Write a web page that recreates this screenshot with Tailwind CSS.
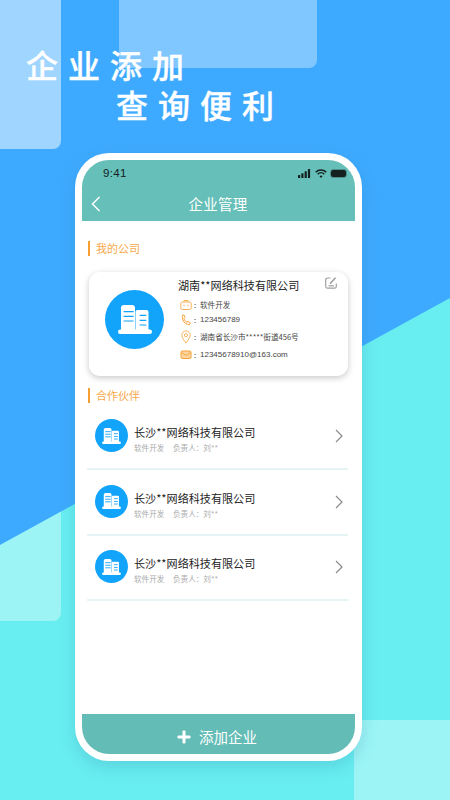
<!DOCTYPE html>
<html lang="zh-CN">
<head>
    <meta charset="UTF-8">
    <meta name="viewport" content="width=device-width, initial-scale=1.0">
    <title>企业管理</title>
    <script src="https://cdn.jsdelivr.net/npm/@tailwindcss/browser@4"></script>
</head>
<body class="m-0 bg-[#3eaaff]">
<div class="relative w-[450px] h-[800px] overflow-hidden bg-[#3eaaff] font-['Noto_Sans_CJK_SC','Noto_Sans',sans-serif]">

    <!-- background shapes -->
    <div class="absolute left-0 top-0 w-[61px] h-[149px] bg-white/50 rounded-br-lg"></div>
    <div class="absolute left-[119px] top-0 w-[198px] h-[68px] bg-white/35 rounded-br-lg"></div>
    <div class="absolute inset-0 bg-[#68eef0] [clip-path:polygon(0_545px,450px_298px,450px_800px,0_800px)]">
        <div class="absolute left-0 top-[480px] w-[61px] h-[141px] bg-white/35 rounded-br-lg"></div>
        <div class="absolute left-[354px] top-[720px] w-[96px] h-[80px] bg-white/35"></div>
    </div>

    <div class="relative flex flex-col h-full">
        <!-- headline -->
        <div class="pt-[44px] pl-[26px] text-white text-[32px] leading-[40px] tracking-[10px] font-medium [-webkit-text-stroke:0.35px_white]">
            <div class="h-[40px] whitespace-nowrap">企业添加</div>
            <div class="h-[40px] pl-[90px] whitespace-nowrap">查询便利</div>
        </div>

        <!-- phone -->
        <div class="mt-[29px] ml-[75px] w-[287px] h-[608px] bg-white rounded-[34px] p-[7px] shadow-[0_6px_16px_rgba(40,120,160,0.22)]">
            <div class="flex flex-col h-full bg-white rounded-[27px] overflow-hidden">
                <!-- status + nav -->
                <div class="h-[61px] shrink-0 bg-[#66bfb8] flex flex-col">
                    <div class="flex items-center justify-between h-[25px] pl-[21px] pr-[9px] pt-[2px]">
                        <span class="text-[11.5px] tracking-[0.3px] text-[#14211f] font-['Liberation_Sans',sans-serif]">9:41</span>
                        <div class="flex items-center gap-[4px]">
                            <svg width="13" height="9" viewBox="0 0 13 9" fill="#14211f"><rect x="0" y="6" width="2.2" height="3" rx=".5"/><rect x="3.3" y="4.3" width="2.2" height="4.7" rx=".5"/><rect x="6.6" y="2.3" width="2.2" height="6.7" rx=".5"/><rect x="9.9" y="0" width="2.2" height="9" rx=".5"/></svg>
                            <svg width="12" height="9" viewBox="0 0 12 9" fill="none" stroke="#14211f" stroke-width="1.5"><path d="M.7 3.2a7.5 7.5 0 0 1 10.6 0"/><path d="M2.7 5.2a4.7 4.7 0 0 1 6.6 0"/><path d="M6 9 4.5 7.3a2.1 2.1 0 0 1 3 0z" fill="#14211f" stroke="none"/></svg>
                            <div class="w-[15px] h-[7px] rounded-[2px] bg-[#14211f] outline outline-[1px] outline-[#14211f]/30"></div>
                        </div>
                    </div>
                    <div class="relative flex items-center justify-center h-[36px] pr-[1px] pt-[2px]">
                        <svg class="absolute left-[9px] top-[11px]" width="10" height="16" viewBox="0 0 10 16" fill="none" stroke="white" stroke-width="1.5"><path d="M8.5 1 1.5 8l7 7"/></svg>
                        <span class="text-[14.5px] text-white tracking-[0.2px]">企业管理</span>
                    </div>
                </div>

                <!-- content -->
                <div class="flex-1 px-[5px] pt-[20px]">
                    <div class="flex items-center h-[15px] ml-[0.5px] border-l-[2px] border-[#f7a032] pl-[6.5px] text-[11px] text-[#f7a94a]">我的公司</div>

                    <!-- my company card -->
                    <div class="relative flex mt-[16px] ml-[2px] w-[259px] h-[104px] bg-white rounded-[11px] shadow-[0_2px_6px_rgba(0,0,0,0.22)]">
                        <div class="w-[59px] h-[59px] mt-[18px] ml-[16px] shrink-0 rounded-full bg-[#12a3fb] flex items-center justify-center">
                            <svg width="34" height="29" viewBox="0 0 34 29"><path d="M3 26V3a3 3 0 0 1 3-3h8a3 3 0 0 1 3 3v23z" fill="white"/><path d="M17.500 26V7a2 2 0 0 1 2-2h9a2 2 0 0 1 2 2v19z" fill="white"/><rect x="0" y="24.500" width="34" height="4.500" rx="2.200" fill="white"/><path d="M5.600 6.600h10M5.600 11.300h10M5.600 16h10M21.600 10.300h6.700M21.600 15.300h6.700M21.600 20h6.700" stroke="#12a3fb" stroke-width="1.200"/></svg>
                        </div>
                        <div class="ml-[14px] pt-[5px]">
                            <div class="text-[11.1px] leading-[17px] text-[#222] whitespace-nowrap">湖南**网络科技有限公司</div>
                            <div class="mt-[3.5px] flex flex-col text-[7.6px] text-[#444]">
                                <div class="flex items-center h-[15px] ml-[2px]">
                                    <svg width="12" height="12" viewBox="0 0 12 12" fill="none" stroke="#f9b058" stroke-width="1"><rect x=".8" y="3" width="10.400" height="7.500" rx="1.800"/><path d="M4 3V1.500h4V3"/><path d="M3.500 6.500h1M7.500 6.500h1" stroke-width="1.400"/></svg>
                                    <span class="w-[6px] text-center">:</span><span class="ml-[2px]">软件开发</span>
                                </div>
                                <div class="flex items-center h-[15px] ml-[2px]">
                                    <svg width="12" height="12" viewBox="0 0 12 12" fill="none" stroke="#f7a032" stroke-width="1"><path d="M2.500 1.200 4 1l1 2.500-1 1c.5 1.500 1.500 3 3 3.800l1.200-.9 2 1.300-.4 1.800c-.3.400-3.800.2-5.800-2.500C2.400 5.500 2 2.500 2.500 1.200z"/></svg>
                                    <span class="w-[6px] text-center">:</span><span class="ml-[2px] text-[8px] font-['Liberation_Sans',sans-serif]">123456789</span>
                                </div>
                                <div class="flex items-center h-[17px] mt-[1px] ml-[2px]">
                                    <svg width="12" height="14" viewBox="0 0 12 15" fill="none" stroke="#f9b058" stroke-width="1"><path d="M6 14C3.500 10.500 1.500 8 1.500 5.500a4.500 4.500 0 0 1 9 0C10.500 8 8.500 10.500 6 14z"/><circle cx="6" cy="5.500" r="1.700"/></svg>
                                    <span class="w-[6px] text-center">:</span><span class="ml-[2px] whitespace-nowrap">湖南省长沙市*****街道456号</span>
                                </div>
                                <div class="flex items-center h-[15px] mt-[1.5px] ml-[2px]">
                                    <svg width="12" height="10" viewBox="0 0 12 10"><rect x="1" y="1" width="10" height="7.500" rx="1.300" fill="#fcd5a0" stroke="#f7a032"/><path d="M1.500 2.500 6 5.500l4.500-3" fill="none" stroke="#f7a032" stroke-width=".9"/></svg>
                                    <span class="w-[6px] text-center">:</span><span class="ml-[2px] text-[8px] whitespace-nowrap font-['Liberation_Sans',sans-serif]">12345678910@163.com</span>
                                </div>
                            </div>
                        </div>
                        <svg class="absolute right-[11px] top-[5px]" width="12" height="12" viewBox="0 0 12 12" fill="none" stroke="#a0a0a0" stroke-width="1.200"><path d="M5.500 1H2.500A1.800 1.800 0 0 0 .7 2.800v6.600a1.800 1.800 0 0 0 1.800 1.800h7a1.800 1.800 0 0 0 1.800-1.800V6.500"/><path d="M5 6.800 10.500.7" stroke-width="1.600"/><path d="M3.500 8.800h5.500"/></svg>
                    </div>

                    <div class="flex items-center h-[15px] mt-[12px] ml-[0.5px] border-l-[2px] border-[#f7a032] pl-[6.5px] text-[11px] text-[#f7a94a]">合作伙伴</div>

                    <!-- partners -->
                    <div class="mt-[1.5px] w-[261px]">
                        <div class="flex items-start h-[65.5px] border-b-2 border-[#e4f3f3] pt-[14.5px] pl-[8px] pr-[5px]">
                            <div class="w-[33px] h-[33px] shrink-0 rounded-full bg-[#12a3fb] flex items-center justify-center">
                                <svg width="19" height="16" viewBox="0 0 34 29"><path d="M3 26V3a3 3 0 0 1 3-3h8a3 3 0 0 1 3 3v23z" fill="white"/><path d="M17.500 26V7a2 2 0 0 1 2-2h9a2 2 0 0 1 2 2v19z" fill="white"/><rect x="0" y="24.500" width="34" height="4.500" rx="2.200" fill="white"/><path d="M5.600 6.600h10M5.600 11.300h10M5.600 16h10M21.600 10.300h6.700M21.600 15.300h6.700M21.600 20h6.700" stroke="#12a3fb" stroke-width="1.600"/></svg>
                            </div>
                            <div class="ml-[6px] mt-[5px] flex-1">
                                <div class="text-[11.1px] leading-[17px] text-[#222] whitespace-nowrap">长沙**网络科技有限公司</div>
                                <div class="mt-[1px] flex text-[7.6px] leading-[12px] text-[#aaa]"><span class="w-[39px]">软件开发</span><span>负责人：刘**</span></div>
                            </div>
                            <svg class="mt-[10px]" width="8" height="14" viewBox="0 0 8 14" fill="none" stroke="#8b8b8b" stroke-width="1.200"><path d="M1 1l6 6-6 6"/></svg>
                        </div>
                        <div class="flex items-start h-[65.5px] border-b-2 border-[#e4f3f3] pt-[14.5px] pl-[8px] pr-[5px]">
                            <div class="w-[33px] h-[33px] shrink-0 rounded-full bg-[#12a3fb] flex items-center justify-center">
                                <svg width="19" height="16" viewBox="0 0 34 29"><path d="M3 26V3a3 3 0 0 1 3-3h8a3 3 0 0 1 3 3v23z" fill="white"/><path d="M17.500 26V7a2 2 0 0 1 2-2h9a2 2 0 0 1 2 2v19z" fill="white"/><rect x="0" y="24.500" width="34" height="4.500" rx="2.200" fill="white"/><path d="M5.600 6.600h10M5.600 11.300h10M5.600 16h10M21.600 10.300h6.700M21.600 15.300h6.700M21.600 20h6.700" stroke="#12a3fb" stroke-width="1.600"/></svg>
                            </div>
                            <div class="ml-[6px] mt-[5px] flex-1">
                                <div class="text-[11.1px] leading-[17px] text-[#222] whitespace-nowrap">长沙**网络科技有限公司</div>
                                <div class="mt-[1px] flex text-[7.6px] leading-[12px] text-[#aaa]"><span class="w-[39px]">软件开发</span><span>负责人：刘**</span></div>
                            </div>
                            <svg class="mt-[10px]" width="8" height="14" viewBox="0 0 8 14" fill="none" stroke="#8b8b8b" stroke-width="1.200"><path d="M1 1l6 6-6 6"/></svg>
                        </div>
                        <div class="flex items-start h-[65.5px] border-b-2 border-[#e4f3f3] pt-[14.5px] pl-[8px] pr-[5px]">
                            <div class="w-[33px] h-[33px] shrink-0 rounded-full bg-[#12a3fb] flex items-center justify-center">
                                <svg width="19" height="16" viewBox="0 0 34 29"><path d="M3 26V3a3 3 0 0 1 3-3h8a3 3 0 0 1 3 3v23z" fill="white"/><path d="M17.500 26V7a2 2 0 0 1 2-2h9a2 2 0 0 1 2 2v19z" fill="white"/><rect x="0" y="24.500" width="34" height="4.500" rx="2.200" fill="white"/><path d="M5.600 6.600h10M5.600 11.300h10M5.600 16h10M21.600 10.300h6.700M21.600 15.300h6.700M21.600 20h6.700" stroke="#12a3fb" stroke-width="1.600"/></svg>
                            </div>
                            <div class="ml-[6px] mt-[5px] flex-1">
                                <div class="text-[11.1px] leading-[17px] text-[#222] whitespace-nowrap">长沙**网络科技有限公司</div>
                                <div class="mt-[1px] flex text-[7.6px] leading-[12px] text-[#aaa]"><span class="w-[39px]">软件开发</span><span>负责人：刘**</span></div>
                            </div>
                            <svg class="mt-[10px]" width="8" height="14" viewBox="0 0 8 14" fill="none" stroke="#8b8b8b" stroke-width="1.200"><path d="M1 1l6 6-6 6"/></svg>
                        </div>
                    </div>
                </div>

                <!-- add button -->
                <div class="h-[40px] shrink-0 bg-[#63bcb5] flex items-center justify-center text-white text-[14.5px] pt-[6px] pr-[3px]">
                    <svg class="mr-[8px]" width="14" height="14" viewBox="0 0 14 14" fill="white"><rect x="5.500" y="0.500" width="3" height="13" rx="1"/><rect x="0.500" y="5.500" width="13" height="3" rx="1"/></svg>
                    <span>添加企业</span>
                </div>
            </div>
        </div>
    </div>
</div>
</body>
</html>
